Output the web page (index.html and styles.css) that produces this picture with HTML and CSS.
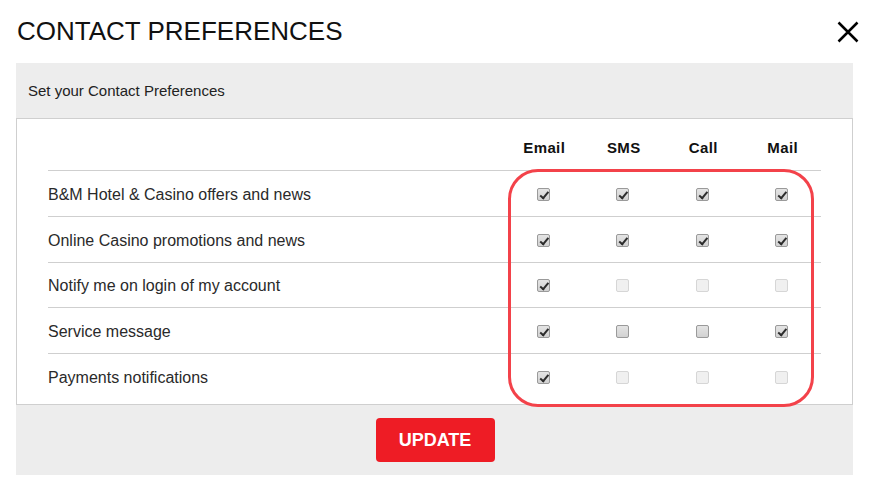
FILE: index.html
```html
<!DOCTYPE html>
<html>
<head>
<meta charset="utf-8">
<link rel="stylesheet" href="styles.css">
</head>
<body>
<div class="modal">
  <div class="title-row">
    <h1 class="title">CONTACT PREFERENCES</h1>
    <button class="close" aria-label="Close">
      <svg width="22" height="22" viewBox="0 0 22 22"><path d="M1.5 1.5 L20.5 20.5 M20.5 1.5 L1.5 20.5" stroke="#000" stroke-width="2.5" fill="none"/></svg>
    </button>
  </div>
  <div class="panel">
    <div class="panel-head">Set your Contact Preferences</div>
    <div class="box">
      <table class="prefs">
        <thead>
          <tr><th class="label-col"></th><th>Email</th><th>SMS</th><th>Call</th><th>Mail</th></tr>
        </thead>
        <tbody>
          <tr><td class="label">B&amp;M Hotel &amp; Casino offers and news</td>
            <td><input type="checkbox" checked></td><td><input type="checkbox" checked></td><td><input type="checkbox" checked></td><td><input type="checkbox" checked></td></tr>
          <tr><td class="label">Online Casino promotions and news</td>
            <td><input type="checkbox" checked></td><td><input type="checkbox" checked></td><td><input type="checkbox" checked></td><td><input type="checkbox" checked></td></tr>
          <tr><td class="label">Notify me on login of my account</td>
            <td><input type="checkbox" checked></td><td><input type="checkbox" disabled></td><td><input type="checkbox" disabled></td><td><input type="checkbox" disabled></td></tr>
          <tr><td class="label">Service message</td>
            <td><input type="checkbox" checked></td><td><input type="checkbox"></td><td><input type="checkbox"></td><td><input type="checkbox" checked></td></tr>
          <tr><td class="label">Payments notifications</td>
            <td><input type="checkbox" checked></td><td><input type="checkbox" disabled></td><td><input type="checkbox" disabled></td><td><input type="checkbox" disabled></td></tr>
        </tbody>
      </table>
    </div>
    <div class="panel-foot">
      <button class="update">UPDATE</button>
    </div>
  </div>
  <div class="highlight"></div>
</div>
</body>
</html>
```

FILE: styles.css
```css
* { box-sizing: border-box; }
html, body { margin: 0; padding: 0; background: #fff; }
body { font-family: "Liberation Sans", Arial, sans-serif; color: #222; }

.modal { position: relative; padding: 0 12px 0 16px; width: 871px; }

.title-row {
  height: 63px;
  display: flex;
  align-items: center;
  justify-content: space-between;
}
.title {
  margin: 0 0 0 1px;
  font-size: 26px;
  font-weight: normal;
  color: #111;
  line-height: 1;
  padding-bottom: 2px;
}
.close {
  border: 0; background: none; padding: 0;
  width: 22px; height: 22px;
  display: flex;
}

.panel { background: #ededed; width: 837px; }
.panel-head {
  height: 55px;
  padding-left: 12px;
  display: flex;
  align-items: center;
  font-size: 15px;
  color: #222;
}
.box {
  background: #fff;
  border: 1px solid #cfcfcf;
  padding: 7px 31px 5px 31px;
}

.prefs { width: 773px; border-collapse: collapse; }
.prefs th {
  height: 44px;
  font-size: 15px;
  font-weight: bold;
  color: #111;
  text-align: center;
  width: 79.5px;
  padding: 0 0 0 3px;
  letter-spacing: 0.4px;
}
.prefs th.label-col { width: auto; }
.prefs td {
  height: 46px;
  border-top: 1px solid #cfcfcf;
  padding: 0;
  text-align: center;
  vertical-align: middle;
}
.prefs tbody tr:nth-child(3) td { height: 45px; }
.prefs td.label {
  text-align: left;
  font-size: 16px;
  color: #2a2a2a;
  padding-top: 3px;
}

.prefs input[type="checkbox"] {
  appearance: none;
  -webkit-appearance: none;
  margin: 1px 0 0 1px;
  width: 13px;
  height: 13px;
  border: 1px solid #9a9a9a;
  border-radius: 2px;
  background: linear-gradient(#e4e4e4, #d2d2d2);
  position: relative;
  vertical-align: middle;
  display: inline-block;
}
.prefs input[type="checkbox"]:checked::after {
  content: "";
  position: absolute;
  left: 4px;
  top: 1px;
  width: 3px;
  height: 6.5px;
  border-right: 2.5px solid #2c2c2c;
  border-bottom: 2.5px solid #2c2c2c;
  transform: rotate(40deg);
}
.prefs input[type="checkbox"]:disabled {
  border-color: #d6d6d6;
  background: #f0f0f0;
}

.panel-foot {
  height: 70px;
  display: flex;
  align-items: center;
  justify-content: center;
}
.update {
  width: 119px;
  height: 44px;
  border: 0;
  border-radius: 4px;
  background: #ee1c25;
  color: #fff;
  font-family: "Liberation Sans", Arial, sans-serif;
  font-weight: bold;
  font-size: 18px;
  margin-left: 1px;
}

.highlight {
  position: absolute;
  left: 508px;
  top: 169px;
  width: 306px;
  height: 238px;
  border: 3px solid #f3424a;
  border-radius: 30px;
  pointer-events: none;
}
```
